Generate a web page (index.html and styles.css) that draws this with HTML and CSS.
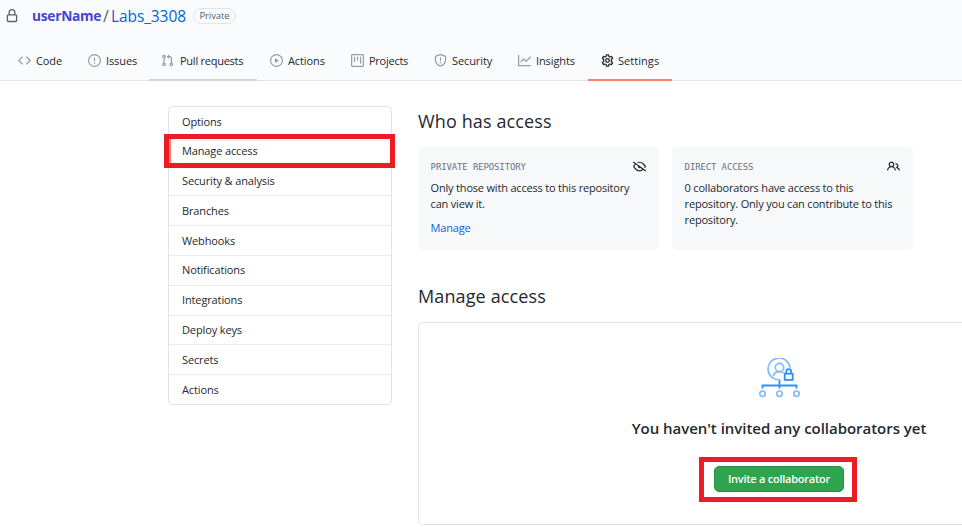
FILE: index.html
```html
<!DOCTYPE html>
<html lang="en">
<head>
<meta charset="utf-8">
<title>Manage access</title>
<link rel="stylesheet" href="styles.css">
</head>
<body>
<header class="header">
  <div class="repo">
    <svg class="lock" viewBox="0 0 16 16"><path fill-rule="evenodd" d="M4 4v2h-.25A1.75 1.75 0 002 7.75v5.5c0 .966.784 1.75 1.75 1.75h8.5A1.75 1.75 0 0014 13.25v-5.5A1.75 1.75 0 0012.25 6H12V4a4 4 0 10-8 0zm6.5 2V4a2.5 2.5 0 00-5 0v2h5zM12 7.5h.25a.25.25 0 01.25.25v5.5a.25.25 0 01-.25.25h-8.5a.25.25 0 01-.25-.25v-5.5a.25.25 0 01.25-.25H12z"/></svg>
    <span class="owner">userName</span><span class="slash">/</span><a class="name">Labs_3308</a>
    <span class="badge">Private</span>
  </div>
  <nav class="tabs">
    <a class="tab code"><svg viewBox="0 0 16 16"><path fill-rule="evenodd" d="M4.72 3.22a.75.75 0 011.06 1.06L2.06 8l3.72 3.72a.75.75 0 11-1.06 1.06L.47 8.53a.75.75 0 010-1.06l4.25-4.25zm6.56 0a.75.75 0 10-1.06 1.06L13.94 8l-3.72 3.72a.75.75 0 101.06 1.06l4.25-4.25a.75.75 0 000-1.06l-4.25-4.25z"/></svg><span>Code</span></a>
    <a class="tab issues"><svg viewBox="0 0 16 16"><path fill-rule="evenodd" d="M8 1.5a6.5 6.5 0 100 13 6.5 6.5 0 000-13zM0 8a8 8 0 1116 0A8 8 0 010 8zm9 3a1 1 0 11-2 0 1 1 0 012 0zm-.25-6.25a.75.75 0 00-1.5 0v3.5a.75.75 0 001.5 0v-3.5z"/></svg><span>Issues</span></a>
    <a class="tab pulls"><svg viewBox="0 0 16 16"><path fill-rule="evenodd" d="M7.177 3.073L9.573.677A.25.25 0 0110 .854v4.792a.25.25 0 01-.427.177L7.177 3.427a.25.25 0 010-.354zM3.75 2.5a.75.75 0 100 1.5.75.75 0 000-1.5zm-2.25.75a2.25 2.25 0 113 2.122v5.256a2.251 2.251 0 11-1.5 0V5.372A2.25 2.25 0 011.5 3.25zM11 2.5h-1V4h1a1 1 0 011 1v5.628a2.251 2.251 0 101.5 0V5A2.5 2.5 0 0011 2.5zm1 10.25a.75.75 0 111.5 0 .75.75 0 01-1.5 0zM3.75 12a.75.75 0 100 1.5.75.75 0 000-1.5z"/></svg><span>Pull requests</span></a>
    <a class="tab actions"><svg viewBox="0 0 16 16"><path fill-rule="evenodd" d="M1.5 8a6.5 6.5 0 1113 0 6.5 6.5 0 01-13 0zM8 0a8 8 0 100 16A8 8 0 008 0zM6.379 5.227A.25.25 0 006 5.442v5.117a.25.25 0 00.379.214l4.264-2.559a.25.25 0 000-.428L6.379 5.227z"/></svg><span>Actions</span></a>
    <a class="tab projects"><svg viewBox="0 0 16 16"><path fill-rule="evenodd" d="M1.75 0A1.75 1.75 0 000 1.75v12.5C0 15.216.784 16 1.75 16h12.5A1.75 1.75 0 0016 14.25V1.75A1.75 1.75 0 0014.25 0H1.75zM1.5 1.75a.25.25 0 01.25-.25h12.5a.25.25 0 01.25.25v12.5a.25.25 0 01-.25.25H1.75a.25.25 0 01-.25-.25V1.75zM11.75 3a.75.75 0 00-.75.75v7.5a.75.75 0 001.5 0v-7.5a.75.75 0 00-.75-.75zm-8.25.75a.75.75 0 011.5 0v5.5a.75.75 0 01-1.5 0v-5.5zM8 3a.75.75 0 00-.75.75v3.5a.75.75 0 001.5 0v-3.5A.75.75 0 008 3z"/></svg><span>Projects</span></a>
    <a class="tab security"><svg viewBox="0 0 16 16"><path fill-rule="evenodd" d="M7.467.133a1.75 1.75 0 011.066 0l5.25 1.68A1.75 1.75 0 0115 3.48V7c0 1.566-.32 3.182-1.303 4.682-.983 1.498-2.585 2.813-5.032 3.855a1.7 1.7 0 01-1.33 0c-2.447-1.042-4.049-2.357-5.032-3.855C1.32 10.182 1 8.566 1 7V3.48a1.75 1.75 0 011.217-1.667l5.25-1.68zm.61 1.429a.25.25 0 00-.153 0l-5.25 1.68a.25.25 0 00-.174.238V7c0 1.358.275 2.666 1.057 3.86.784 1.194 2.121 2.34 4.366 3.297a.2.2 0 00.154 0c2.245-.956 3.582-2.104 4.366-3.298C13.225 9.666 13.5 8.36 13.5 7V3.48a.25.25 0 00-.174-.237l-5.25-1.68zM9 10.5a1 1 0 11-2 0 1 1 0 012 0zm-.25-5.75a.75.75 0 10-1.5 0v3a.75.75 0 001.5 0v-3z"/></svg><span>Security</span></a>
    <a class="tab insights"><svg viewBox="0 0 16 16"><path fill-rule="evenodd" d="M1.5 1.75a.75.75 0 00-1.5 0v12.5c0 .414.336.75.75.75h14.5a.75.75 0 000-1.5H1.5V1.75zm14.28 2.53a.75.75 0 00-1.06-1.06L10 7.94 7.53 5.47a.75.75 0 00-1.06 0L3.22 8.72a.75.75 0 001.06 1.06L7 7.06l2.47 2.47a.75.75 0 001.06 0l5.25-5.25z"/></svg><span>Insights</span></a>
    <a class="tab settings"><svg viewBox="0 0 16 16"><g fill="none" stroke="currentColor" stroke-width="1.6" stroke-linejoin="round"><path d="M6.7 1h2.6l.4 2 1.2.7 2-.7 1.4 2.3-1.6 1.4v2.6l1.6 1.4-1.4 2.3-2-.7-1.2.7-.4 2H6.7l-.4-2-1.2-.7-2 .7-1.4-2.3 1.6-1.4V6.7L1.7 5.3 3.1 3l2 .7 1.2-.7z"/><circle cx="8" cy="8" r="2.2"/></g></svg><span>Settings</span></a>
  </nav>
</header>
<main class="main">
  <nav class="menu">
    <a>Options</a>
    <a class="current">Manage access</a>
    <a>Security &amp; analysis</a>
    <a>Branches</a>
    <a>Webhooks</a>
    <a>Notifications</a>
    <a>Integrations</a>
    <a>Deploy keys</a>
    <a>Secrets</a>
    <a>Actions</a>
    <div class="mark mark-menu"></div>
  </nav>
  <div class="content">
    <h2 class="who">Who has access</h2>
    <div class="cards">
      <section class="card">
        <div class="card-head"><span>PRIVATE REPOSITORY</span><svg viewBox="0 0 16 16"><path fill-rule="evenodd" d="M.143 2.31a.75.75 0 011.047-.167l14.5 10.5a.75.75 0 11-.88 1.214l-2.248-1.628C11.346 13.19 9.792 14 8 14c-1.981 0-3.67-.992-4.933-2.078C1.797 10.832.88 9.577.43 8.9a1.618 1.618 0 010-1.797c.353-.533.995-1.42 1.868-2.305L.31 3.357A.75.75 0 01.143 2.31zm3.386 3.378a14.21 14.21 0 00-1.85 2.244.12.12 0 00-.022.068c0 .021.006.045.022.068.412.621 1.242 1.75 2.366 2.717C5.175 11.758 6.527 12.5 8 12.5c1.195 0 2.31-.488 3.29-1.191L9.063 9.695A2 2 0 016.058 7.52L3.529 5.688zM8 3.5c-.516 0-1.017.09-1.499.251a.75.75 0 11-.473-1.423A6.23 6.23 0 018 2c1.981 0 3.67.992 4.933 2.078 1.27 1.091 2.187 2.345 2.637 3.023a1.62 1.62 0 010 1.798c-.11.166-.248.365-.41.587a.75.75 0 11-1.21-.887c.148-.201.272-.382.371-.53a.119.119 0 000-.137c-.412-.621-1.242-1.75-2.366-2.717C10.825 4.242 9.473 3.5 8 3.5z"/></svg></div>
        <p>Only those with access to this repository<br>can view it.</p>
        <a class="manage">Manage</a>
      </section>
      <section class="card">
        <div class="card-head"><span>DIRECT ACCESS</span><svg viewBox="0 0 16 16"><path fill-rule="evenodd" d="M5.5 3.5a2 2 0 100 4 2 2 0 000-4zM2 5.5a3.5 3.5 0 115.898 2.549 5.507 5.507 0 013.034 4.084.75.75 0 11-1.482.235 4.001 4.001 0 00-7.9 0 .75.75 0 01-1.482-.236A5.507 5.507 0 013.102 8.05 3.49 3.49 0 012 5.5zM11 4a.75.75 0 100 1.5 1.5 1.5 0 01.666 2.844.75.75 0 00-.416.672v.352a.75.75 0 00.574.73c1.2.289 2.162 1.2 2.522 2.372a.75.75 0 101.434-.44 5.01 5.01 0 00-2.56-3.012A3 3 0 0011 4z"/></svg></div>
        <p>0 collaborators have access to this<br>repository. Only you can contribute to this<br>repository.</p>
      </section>
    </div>
    <h2 class="access">Manage access</h2>
    <section class="blank">
      <svg class="people" viewBox="0 0 42 40"><g stroke="#84bcfb"><path d="M22.5 21.9A11 11 0 1 1 32 9.8"/><circle cx="21.5" cy="9.5" r="4.2"/><path d="M15.2 18.2c.7-3.4 3-4.6 6.3-4.6 1.8 0 3.2.4 4.2 1.4"/><circle cx="4.5" cy="35.7" r="2.7"/><circle cx="21.5" cy="35.7" r="2.7"/><circle cx="38.5" cy="35.7" r="2.7"/></g><g stroke="#2f8fff" stroke-width="1.8"><path d="M21.5 22.5v8M4.5 30.5v-3h34v3"/><rect x="26.7" y="15.7" width="8" height="6.2"/><path d="M28.3 15.5v-2a2.4 2.4 0 0 1 4.8 0v2"/></g></svg>
      <h3>You haven't invited any collaborators yet</h3>
      <div class="mark mark-button"><button>Invite a collaborator</button></div>
    </section>
  </div>
</main>
</body>
</html>
```
FILE: styles.css
```css
* { box-sizing: border-box; }
body { margin: 0; width: 962px; height: 527px; overflow: hidden; background: #fff; color: #24292e; font: 11px/16px "Open Sans", "Noto Sans", sans-serif; letter-spacing: -0.1px; }
svg { display: block; flex: none; fill: currentColor; }
h2, h3, p { margin: 0; }
.header { height: 81px; background: #fafbfc; border-bottom: 1px solid #e1e4e8; display: flex; flex-direction: column; justify-content: space-between; }
.repo { display: flex; align-items: center; height: 31px; padding-left: 5px; white-space: nowrap; }
.lock { width: 14px; height: 14px; color: #586069; }
.owner { width: 70px; margin-left: 13px; font-size: 13.8px; font-weight: 700; color: #4545cf; letter-spacing: -0.3px; }
.slash { width: 9px; padding-left: 1px; font-size: 16px; color: #586069; }
.name { width: 82px; font-size: 15.5px; font-weight: 500; color: #0366d6; letter-spacing: -0.1px; }
.badge { width: 43px; height: 16px; line-height: 14px; border: 1px solid #e1e4e8; border-radius: 8px; text-align: center; font-size: 9.5px; color: #586069; }
.tabs { display: flex; height: 41px; padding-left: 5px; margin-bottom: -1px; }
.tab { display: flex; align-items: center; gap: 5px; padding: 2px 0 0 13px; border-bottom: 2px solid transparent; white-space: nowrap; }
.tab svg { width: 13px; height: 13px; color: #959da5; }
.code { width: 70px; }
.issues { width: 74px; }
.pulls { width: 108px; border-color: #d1d5da; gap: 6px; letter-spacing: -0.25px; }
.pulls svg { margin-left: -1px; }
.actions { width: 81px; }
.projects { width: 83px; letter-spacing: -0.25px; }
.security { width: 84px; }
.insights { width: 83px; }
.settings { width: 84px; border-color: #f9826c; gap: 4px; }
.settings span { letter-spacing: .05px; font-weight: 500; }
.tab.settings svg { color: #24292e; }
.main { display: flex; gap: 26px; width: 962px; overflow: hidden; padding: 25px 0 0 168px; }
.menu { position: relative; flex: none; display: flex; flex-direction: column; width: 224px; height: 299px; border: 1px solid #e1e4e8; border-radius: 5px; }
.menu a { flex: 1 1 0; min-height: 0; display: flex; align-items: center; padding-left: 13px; border-bottom: 1px solid #eaecef; letter-spacing: -0.13px; }
.menu a:first-child { align-items: flex-start; line-height: 29px; }
.menu a:nth-of-type(10) { border-bottom: 0; }
.menu .current { border-left: 2px solid #f9826c; padding-left: 11px; }
.mark { border: 5px solid #ed1c24; }
.mark-menu { position: absolute; left: -5px; top: 27px; width: 231px; height: 34px; }
.content { flex: none; width: 722px; }
h2 { font-size: 18px; line-height: 26px; font-weight: 400; letter-spacing: 0.12px; }
.who { margin-top: 2px; }
.cards { display: flex; gap: 13px; margin-top: 13px; }
.card { width: 241px; height: 103px; padding: 13px 13px 0 12.6px; border-radius: 5px; background: #f6f8fa; white-space: nowrap; letter-spacing: -0.19px; }
.card-head { display: flex; justify-content: space-between; height: 20px; font: 9px/14px "DejaVu Sans Mono", monospace; color: #6a737d; letter-spacing: -0.13px; }
.card-head svg { width: 13px; height: 13px; color: #24292e; }
.manage { display: block; margin-top: 8px; color: #0366d6; }
.access { margin-top: 33px; }
.blank { display: flex; flex-direction: column; align-items: center; height: 203px; margin-top: 13px; padding-top: 35px; border: 1px solid #e1e4e8; border-radius: 5px; }
.people { width: 42px; height: 40px; fill: none; stroke-width: 1.7; }
h3 { margin-top: 18px; font-size: 15px; line-height: 24px; font-weight: 600; letter-spacing: -0.03px; white-space: nowrap; }
.mark-button { display: flex; justify-content: center; width: 158px; height: 45px; margin: 17px 2px 0 0; padding: 4px 0 0 2px; }
button { width: 130px; height: 26px; padding: 0; border: 1px solid #2a8f47; border-radius: 5px; background: #2ea44f; color: #fff; font: 600 11px/16px "Open Sans", sans-serif; letter-spacing: -0.25px; white-space: nowrap; }
```
